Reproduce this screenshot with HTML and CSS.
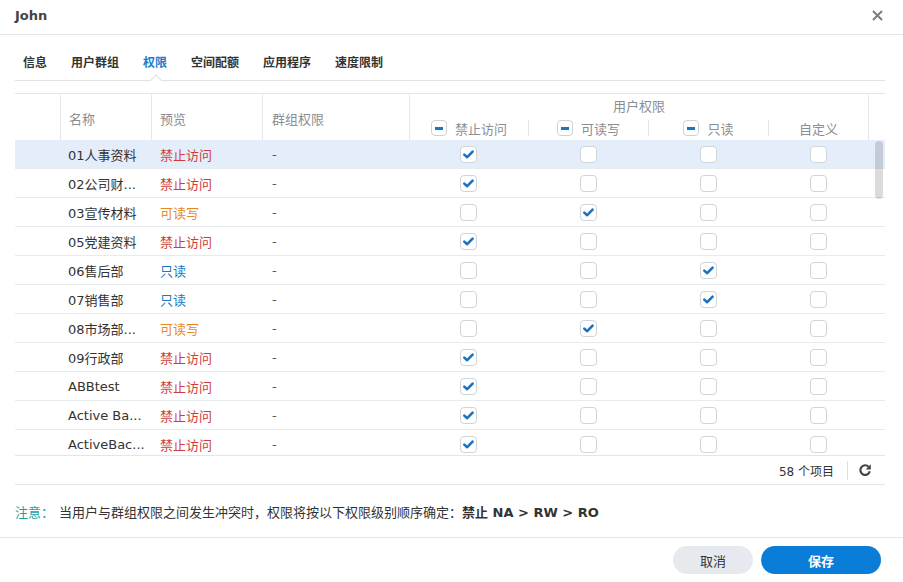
FILE: index.html
```html
<!DOCTYPE html>
<html lang="zh-CN">
<head>
<meta charset="utf-8">
<title>John</title>
<link rel="stylesheet" href="styles.css">
</head>
<body>
<div class="dialog">
  <header class="titlebar">
    <span class="title">John</span>
    <span class="close"><svg width="11" height="11" viewBox="0 0 11 11"><path d="M1 1 L10 10 M10 1 L1 10" stroke="#7d7d7d" stroke-width="2" fill="none"/></svg></span>
  </header>
  <nav class="tabs">
    <span class="tab">信息</span>
    <span class="tab">用户群组</span>
    <span class="tab active">权限</span>
    <span class="tab">空间配额</span>
    <span class="tab">应用程序</span>
    <span class="tab">速度限制</span>
  </nav>
  <section class="grid">
    <div class="ghead">
      <div class="hcell c1 blank"></div>
      <div class="hcell c2">名称</div>
      <div class="hcell c3">预览</div>
      <div class="hcell c4">群组权限</div>
      <div class="hperm">用户权限</div>
      <div class="sub s1"><span class="sub-in"><i class="minus"></i>禁止访问</span></div>
      <div class="sub s2"><span class="sub-in"><i class="minus"></i>可读写</span></div>
      <div class="sub s3"><span class="sub-in"><i class="minus"></i>只读</span></div>
      <div class="sub s4"><span class="sub-in">自定义</span></div>
      <div class="hscroll"></div>
    </div>
    <div class="gbody">
      <div class="row sel"><span></span><span class="name">01人事资料</span><span class="prev na">禁止访问</span><span class="grp">-</span><i class="cb on"><svg viewBox="0 0 15 15"><path d="M3.3 7.6 L6.2 10.2 L11.6 4.7"/></svg></i><i class="cb"></i><i class="cb"></i><i class="cb"></i></div>
      <div class="row"><span></span><span class="name">02公司财...</span><span class="prev na">禁止访问</span><span class="grp">-</span><i class="cb on"><svg viewBox="0 0 15 15"><path d="M3.3 7.6 L6.2 10.2 L11.6 4.7"/></svg></i><i class="cb"></i><i class="cb"></i><i class="cb"></i></div>
      <div class="row"><span></span><span class="name">03宣传材料</span><span class="prev rw">可读写</span><span class="grp">-</span><i class="cb"></i><i class="cb on"><svg viewBox="0 0 15 15"><path d="M3.3 7.6 L6.2 10.2 L11.6 4.7"/></svg></i><i class="cb"></i><i class="cb"></i></div>
      <div class="row"><span></span><span class="name">05党建资料</span><span class="prev na">禁止访问</span><span class="grp">-</span><i class="cb on"><svg viewBox="0 0 15 15"><path d="M3.3 7.6 L6.2 10.2 L11.6 4.7"/></svg></i><i class="cb"></i><i class="cb"></i><i class="cb"></i></div>
      <div class="row"><span></span><span class="name">06售后部</span><span class="prev ro">只读</span><span class="grp">-</span><i class="cb"></i><i class="cb"></i><i class="cb on"><svg viewBox="0 0 15 15"><path d="M3.3 7.6 L6.2 10.2 L11.6 4.7"/></svg></i><i class="cb"></i></div>
      <div class="row"><span></span><span class="name">07销售部</span><span class="prev ro">只读</span><span class="grp">-</span><i class="cb"></i><i class="cb"></i><i class="cb on"><svg viewBox="0 0 15 15"><path d="M3.3 7.6 L6.2 10.2 L11.6 4.7"/></svg></i><i class="cb"></i></div>
      <div class="row"><span></span><span class="name">08市场部...</span><span class="prev rw">可读写</span><span class="grp">-</span><i class="cb"></i><i class="cb on"><svg viewBox="0 0 15 15"><path d="M3.3 7.6 L6.2 10.2 L11.6 4.7"/></svg></i><i class="cb"></i><i class="cb"></i></div>
      <div class="row"><span></span><span class="name">09行政部</span><span class="prev na">禁止访问</span><span class="grp">-</span><i class="cb on"><svg viewBox="0 0 15 15"><path d="M3.3 7.6 L6.2 10.2 L11.6 4.7"/></svg></i><i class="cb"></i><i class="cb"></i><i class="cb"></i></div>
      <div class="row"><span></span><span class="name">ABBtest</span><span class="prev na">禁止访问</span><span class="grp">-</span><i class="cb on"><svg viewBox="0 0 15 15"><path d="M3.3 7.6 L6.2 10.2 L11.6 4.7"/></svg></i><i class="cb"></i><i class="cb"></i><i class="cb"></i></div>
      <div class="row"><span></span><span class="name">Active Ba...</span><span class="prev na">禁止访问</span><span class="grp">-</span><i class="cb on"><svg viewBox="0 0 15 15"><path d="M3.3 7.6 L6.2 10.2 L11.6 4.7"/></svg></i><i class="cb"></i><i class="cb"></i><i class="cb"></i></div>
      <div class="row"><span></span><span class="name">ActiveBac...</span><span class="prev na">禁止访问</span><span class="grp">-</span><i class="cb on"><svg viewBox="0 0 15 15"><path d="M3.3 7.6 L6.2 10.2 L11.6 4.7"/></svg></i><i class="cb"></i><i class="cb"></i><i class="cb"></i></div>
      <div class="scrollbar"></div>
    </div>
    <div class="gfoot">
      <span class="count">58 个项目</span>
      <span class="vsep"></span>
      <span class="refresh"><svg width="14" height="14" viewBox="0 0 14 14"><path d="M10.6 3.7 A4.8 4.8 0 1 0 11.8 8.3" fill="none" stroke="#444" stroke-width="2.2"/><path d="M12.8 1.2 L12.8 6.4 L7.7 6.4 Z" fill="#444"/></svg></span>
    </div>
  </section>
  <p class="note"><span class="note-label">注意：</span><span class="note-text">当用户与群组权限之间发生冲突时，权限将按以下权限级别顺序确定：<b>禁止 NA &gt; RW &gt; RO</b></span></p>
  <footer class="actions">
    <button class="btn cancel">取消</button>
    <button class="btn save">保存</button>
  </footer>
</div>
</body>
</html>
```

FILE: styles.css
```css
* { box-sizing: border-box; margin: 0; padding: 0; }
html, body { width: 903px; height: 582px; overflow: hidden; background: #fff; }
body {
  font-family: "DejaVu Sans", "Noto Sans CJK SC", sans-serif;
  font-size: 13px;
  color: #333;
}
.dialog { width: 903px; height: 582px; display: flex; flex-direction: column; }

.titlebar {
  height: 35px;
  flex: none;
  border-bottom: 1px solid #e3e5e8;
  display: flex;
  align-items: center;
  justify-content: space-between;
  padding: 0 20px 4px 15px;
}
.title { font-weight: bold; font-size: 13px; color: #444; }
.close { display: block; width: 11px; height: 11px; }
.close svg { display: block; }

.tabs {
  height: 46px;
  flex: none;
  margin: 0 18px 0 15px;
  padding: 7px 0 0 8px;
  border-bottom: 1px solid #e0e3e6;
  display: flex;
  gap: 24px;
}
.tab {
  position: relative;
  display: flex;
  align-items: center;
  font-size: 12px;
  font-weight: bold;
  color: #333;
}
.tab.active { color: #1a7dcc; }
.tab.active::after {
  content: "";
  position: absolute;
  left: 50%;
  bottom: -4px;
  width: 7px;
  height: 7px;
  margin-left: -3.5px;
  background: #fff;
  border-left: 1px solid #dcdfe3;
  border-top: 1px solid #dcdfe3;
  transform: rotate(45deg);
}

.grid { margin: 12px 18px 0 15px; flex: none; }
.ghead {
  display: grid;
  grid-template-columns: 45px 91px 111px 147px 119px 120px 120px 100px 17px;
  grid-template-rows: 25px 21px;
  border-top: 1px solid #e3e6e9;
  color: #8a8e93;
}
.hcell {
  grid-row: 1 / 3;
  border-left: 1px solid #e6e9ec;
  display: flex;
  align-items: center;
  padding: 2px 0 0 8px;
}
.hcell.blank { border-left: 0; }
.c1 { grid-column: 1; }
.c2 { grid-column: 2; }
.c3 { grid-column: 3; }
.c4 { grid-column: 4; padding-left: 9px; }
.hperm {
  grid-column: 5 / 9;
  grid-row: 1;
  border-left: 1px solid #e6e9ec;
  text-align: center;
  line-height: 25px;
}
.sub { grid-row: 2; display: flex; align-items: flex-start; }
.s1 { grid-column: 5; border-left: 1px solid #e6e9ec; }
.s2 { grid-column: 6; }
.s3 { grid-column: 7; }
.s4 { grid-column: 8; }
.sub-in {
  flex: 1;
  height: 16px;
  margin-top: 1px;
  display: flex;
  align-items: center;
  justify-content: center;
  gap: 8px;
}
.s2 .sub-in, .s3 .sub-in, .s4 .sub-in { border-left: 1px solid #e3e6e9; }
.hscroll { grid-column: 9; grid-row: 1 / 3; border-left: 1px solid #e6e9ec; }
.minus {
  position: relative;
  display: block;
  width: 16px;
  height: 16px;
  border: 1px solid #cdd2d7;
  border-radius: 4px;
  background: #fff;
}
.minus::after {
  content: "";
  position: absolute;
  left: 3px;
  top: 5.5px;
  width: 8px;
  height: 3px;
  background: #1677c2;
}

.gbody {
  position: relative;
  height: 316px;
  overflow: hidden;
  border-bottom: 1px solid #e3e6e9;
}
.row {
  display: grid;
  grid-template-columns: 45px 91px 111px 147px 119px 120px 120px 100px 17px;
  height: 29px;
  align-items: center;
  border-bottom: 1px solid #e8ebee;
}
.row.sel { background: #e4eefa; }
.name { padding-left: 8px; white-space: nowrap; color: #333; }
.prev { padding-left: 9px; white-space: nowrap; }
.grp { padding-left: 10px; color: #555; }
.na { color: #d03c3c; }
.rw { color: #e8891c; }
.ro { color: #1a79c4; }
.cb {
  justify-self: center;
  display: block;
  width: 17px;
  height: 17px;
  border: 1px solid #d0d5da;
  border-radius: 4px;
  background: #fff;
}
.cb svg { display: block; width: 15px; height: 15px; }
.cb svg path {
  fill: none;
  stroke: #1a72c0;
  stroke-width: 2.6;
  stroke-linecap: round;
  stroke-linejoin: round;
}
.scrollbar {
  position: absolute;
  right: 2px;
  top: 1px;
  width: 8px;
  height: 58px;
  border-radius: 4px;
  background: rgba(0, 0, 0, 0.14);
}

.gfoot {
  height: 29px;
  display: flex;
  align-items: center;
  justify-content: flex-end;
  padding-right: 13px;
  border-bottom: 1px solid #e3e6e9;
  font-size: 12px;
  color: #333;
}
.vsep { width: 1px; height: 19px; background: #dcdfe3; margin: 0 10px 0 13px; }
.refresh { display: block; width: 14px; height: 14px; }
.refresh svg { display: block; }

.note {
  height: 53px;
  flex: none;
  display: flex;
  align-items: center;
  padding-left: 15px;
  border-bottom: 1px solid #e3e6e9;
  font-size: 13px;
}
.note-label { color: #1f9e9e; margin-right: 5px; }
.note-text { color: #333; }
.note-text b { font-weight: bold; color: #333; }

.actions {
  flex: 1;
  display: flex;
  align-items: center;
  justify-content: flex-end;
  gap: 8px;
  padding-right: 22px;
}
.btn {
  height: 28px;
  border: 0;
  border-radius: 14px;
  font-family: "DejaVu Sans", "Noto Sans CJK SC", sans-serif;
  font-size: 13px;
}
.cancel { width: 80px; background: #e6eaee; color: #333; }
.save { width: 120px; background: #0a7dd8; color: #fff; font-weight: bold; }
```
